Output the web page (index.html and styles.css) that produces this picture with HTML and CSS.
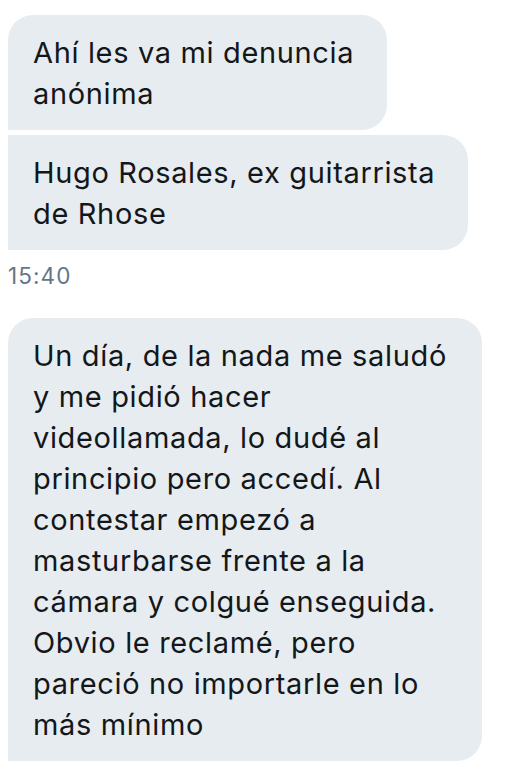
FILE: index.html
```html
<!DOCTYPE html>
<html lang="es">
<head>
<meta charset="utf-8">
<title>Mensajes</title>
<link rel="stylesheet" href="styles.css">
</head>
<body>
<main class="thread">
  <div class="bubble first">Ahí les va mi denuncia<br>anónima</div>
  <div class="bubble middle">Hugo Rosales, ex guitarrista<br>de Rhose</div>
  <div class="time">15:40</div>
  <div class="bubble single">Un día, de la nada me saludó<br>y me pidió hacer<br>videollamada, lo dudé al<br>principio pero accedí. Al<br>contestar empezó a<br>masturbarse frente a la<br>cámara y colgué enseguida.<br>Obvio le reclamé, pero<br>pareció no importarle en lo<br>más mínimo</div>
</main>
</body>
</html>
```

FILE: styles.css
```css
html, body {
  margin: 0;
  padding: 0;
  background: #ffffff;
}

.thread {
  display: flex;
  flex-direction: column;
  align-items: flex-start;
  padding: 15px 0 0 8px;
  font-family: Inter, "Noto Sans", sans-serif;
  color: #14171a;
}

.bubble {
  background: #e6ecf0;
  font-size: 29px;
  line-height: 41px;
  letter-spacing: 0.65px;
  padding: 17px 33px 16px 25px;
  white-space: nowrap;
  border-radius: 25px;
}

.first {
  border-bottom-left-radius: 0;
}

.middle {
  margin-top: 5px;
  border-top-left-radius: 0;
  border-bottom-left-radius: 0;
}

.single {
  width: 416px;
  border-bottom-left-radius: 0;
}

.time {
  margin: 13px 0 29px 0;
  font-size: 22.5px;
  line-height: 26px;
  letter-spacing: 1.1px;
  color: #657786;
}
```
